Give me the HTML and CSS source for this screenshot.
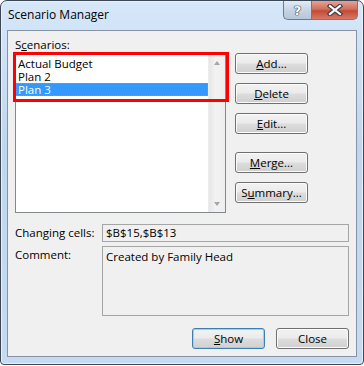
FILE: index.html
```html
<html>
	<head>
		<title>Scenario Manager</title>
		<link rel="stylesheet" href="styles.css">
	</head>
	<body>
		<div class="window">
			<div class="titlebar">
				<span class="title">Scenario Manager</span>
				<div class="caption-btns">
					<div class="cap-help">?</div>
					<div class="cap-close">
						<svg width="16" height="12" viewBox="0 0 16 12">
							<path d="M3 2 L13 10 M13 2 L3 10" stroke="#3a3f49" stroke-width="4.4" stroke-linecap="square"/>
							<path d="M3 2 L13 10 M13 2 L3 10" stroke="#ffffff" stroke-width="2.2" stroke-linecap="square"/>
						</svg>
					</div>
				</div>
			</div>
			<div class="client">
				<div class="top">
					<div class="scenarios">
						<div class="label">S<u>c</u>enarios:</div>
						<div class="listbox">
							<ul class="items">
								<li>Actual Budget</li>
								<li>Plan 2</li>
								<li class="selected">Plan 3</li>
							</ul>
							<div class="scrollbar">
								<span class="arrow-up"></span>
								<span class="arrow-down"></span>
							</div>
						</div>
						<div class="mark"></div>
					</div>
					<div class="side-btns">
						<button class="btn"><u>A</u>dd...</button>
						<button class="btn"><u>D</u>elete</button>
						<button class="btn"><u>E</u>dit...</button>
						<button class="btn group"><u>M</u>erge...</button>
						<button class="btn">S<u>u</u>mmary...</button>
					</div>
				</div>
				<div class="field-row">
					<div class="field-label">Changing cells:</div>
					<div class="field-box">$B$15,$B$13</div>
				</div>
				<div class="field-row comment">
					<div class="field-label">Comment:</div>
					<div class="field-box comment-box">Created by Family Head</div>
				</div>
				<div class="footer">
					<button class="btn default"><u>S</u>how</button>
					<button class="btn">Close</button>
				</div>
			</div>
		</div>
	</body>
</html>
```

FILE: styles.css
```css
* {
	margin: 0;
	padding: 0;
	box-sizing: border-box;
}
body {
	background: #ffffff;
	font-family: "Open Sans", "Noto Sans", sans-serif;
	font-size: 11.5px;
	color: #000000;
}
.window {
	width: 364px;
	height: 365px;
	border: 1px solid #3b4655;
	border-radius: 7px 7px 4px 4px;
	background: linear-gradient(#d6e7f9, #c0d6ee 40%, #c6dbf1);
	padding: 0 6px 7px 6px;
	display: flex;
	flex-direction: column;
	box-shadow: inset 0 0 0 1px #e9f2fc;
}
.titlebar {
	height: 29px;
	display: flex;
	justify-content: space-between;
	align-items: flex-start;
}
.title {
	margin: 6px 0 0 1px;
	line-height: 15px;
	font-size: 12px;
	color: #000000;
}
.caption-btns {
	display: flex;
	margin-right: -1px;
}
.cap-help, .cap-close {
	height: 19px;
	border: 1px solid #6d7a8b;
	border-top: none;
	display: flex;
	align-items: center;
	justify-content: center;
}
.cap-help {
	width: 28px;
	border-radius: 0 0 0 5px;
	border-right: none;
	background: linear-gradient(#e3ecf6, #c6d4e4 50%, #b7c7da);
	color: #ffffff;
	font-family: "DejaVu Sans", sans-serif;
	font-weight: bold;
	font-size: 13px;
	text-shadow: 0 0 1px #2c3440, 0 0 1px #2c3440, 0 0 1px #2c3440;
}
.cap-close {
	width: 47px;
	border-radius: 0 0 5px 0;
	background: linear-gradient(#e7a194, #d0705e 45%, #c44a31 55%, #d9786a);
}
.client {
	flex: 1;
	border: 1px solid #8593a5;
	background: #f0f0f0;
	padding: 6px 6px 0 7px;
	display: flex;
	flex-direction: column;
}
.top {
	display: flex;
	gap: 9px;
}
.scenarios {
	position: relative;
}
.label {
	height: 16px;
	line-height: 15px;
}
.listbox {
	width: 211px;
	height: 160px;
	border: 1px solid #828790;
	background: #ffffff;
	display: flex;
}
.items {
	list-style: none;
	flex: 1;
	padding-top: 3px;
}
.items li {
	height: 13px;
	line-height: 13px;
	padding-left: 2px;
	white-space: nowrap;
}
.items li.selected {
	background: #3399ff;
	color: #ffffff;
	outline: 1px dotted #c9874d;
	outline-offset: -1px;
}
.scrollbar {
	width: 17px;
	background: linear-gradient(90deg, #e6e6e6, #f2f2f2 40%, #eeeeee);
	border-left: 1px solid #ececec;
	display: flex;
	flex-direction: column;
	justify-content: space-between;
	align-items: center;
	padding: 7px 0 6px;
}
.arrow-up, .arrow-down {
	width: 0;
	height: 0;
	border-left: 3.5px solid transparent;
	border-right: 3.5px solid transparent;
}
.arrow-up {
	border-bottom: 4px solid #a6a6a6;
}
.arrow-down {
	border-top: 4px solid #a6a6a6;
}
.mark {
	position: absolute;
	left: -2px;
	top: 15px;
	width: 216px;
	height: 50px;
	border: 3px solid #ff0000;
}
.side-btns {
	display: flex;
	flex-direction: column;
	gap: 9px;
	padding-top: 16px;
}
.btn {
	width: 73px;
	height: 21px;
	border: 1px solid #707070;
	border-radius: 3px;
	background: linear-gradient(#f2f2f2, #ebebeb 48%, #dddddd 52%, #cfcfcf);
	box-shadow: inset 0 0 0 1px #fbfbfb;
	font-family: "Open Sans", "Noto Sans", sans-serif;
	font-size: 11.5px;
	color: #000000;
	line-height: 17px;
}
.btn.group {
	margin-top: 9px;
}
.btn.default {
	border-color: #3c7fb1;
	box-shadow: inset 0 0 0 1px #8fd6f6;
}
.field-row {
	display: flex;
	margin-top: 11px;
}
.field-row.comment {
	margin-top: 4px;
}
.field-label {
	width: 87px;
	line-height: 18px;
}
.field-box {
	width: 247px;
	height: 18px;
	border: 1px solid #a5a5a5;
	background: #f0f0f0;
	padding-left: 3px;
	line-height: 16px;
}
.comment-box {
	height: 70px;
	padding-top: 2px;
}
.footer {
	display: flex;
	justify-content: flex-end;
	gap: 11px;
	margin-top: 12px;
	padding-right: 1px;
}
```
